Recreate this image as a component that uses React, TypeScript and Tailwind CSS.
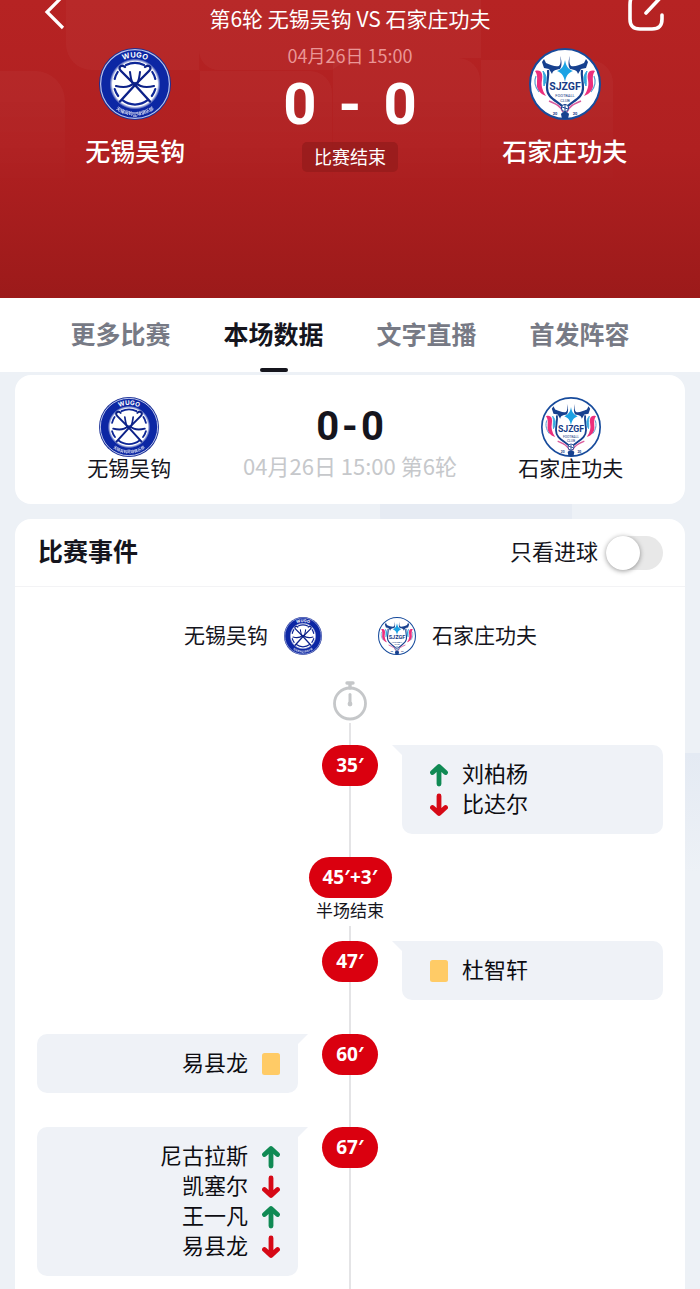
import React, { useState } from 'react';

type IconKind = 'up' | 'down' | 'yellow';

interface MatchEvent {
  minute: string;
  side: 'home' | 'away' | 'none';
  label?: string;
  spacing?: string;
  players: { name: string; icon: IconKind }[];
}

const HOME = '无锡吴钩';
const AWAY = '石家庄功夫';

const tabs = ['更多比赛', '本场数据', '文字直播', '首发阵容'];

const events: MatchEvent[] = [
  {
    minute: '35′',
    side: 'away',
    spacing: 'mb-[23px]',
    players: [
      { name: '刘柏杨', icon: 'up' },
      { name: '比达尔', icon: 'down' },
    ],
  },
  { minute: '45′+3′', side: 'none', label: '半场结束', players: [] },
  { minute: '47′', side: 'away', spacing: 'mb-[34px]', players: [{ name: '杜智轩', icon: 'yellow' }] },
  { minute: '60′', side: 'home', spacing: 'mb-[34px]', players: [{ name: '易县龙', icon: 'yellow' }] },
  {
    minute: '67′',
    side: 'home',
    players: [
      { name: '尼古拉斯', icon: 'up' },
      { name: '凯塞尔', icon: 'down' },
      { name: '王一凡', icon: 'up' },
      { name: '易县龙', icon: 'down' },
    ],
  },
];

const WugoLogo = ({ className }: { className: string }) => (
  <svg viewBox="0 0 72 72" className={className} aria-hidden="true">
    <defs>
      <path id="wugo-top" d="M9.5 36a26.5 26.5 0 0 1 53 0" />
      <path id="wugo-bottom" d="M4.5 36a31.5 31.5 0 0 0 63 0" />
      <radialGradient id="wugo-glow">
        <stop offset="0.88" stopColor="#fff" />
        <stop offset="1" stopColor="#fff" stopOpacity="0" />
      </radialGradient>
    </defs>
    <circle cx="36" cy="36" r="36" fill="#1a2f96" />
    <circle cx="36" cy="36" r="34.4" fill="#0c27a4" stroke="#b9c3ea" strokeWidth="1.2" />
    <circle cx="36" cy="36" r="25.5" fill="url(#wugo-glow)" />
    <g fill="none" stroke="#0c2596" strokeWidth="2.2" strokeLinecap="round">
      <path d="M27 17a21 21 0 0 1 18 0M23.4 52.2a20.5 20.5 0 0 0 25.2 0" />
      <path d="M15.7 31a20.5 20.5 0 0 1 3-7M15.7 41a20.5 20.5 0 0 0 3.5 7" />
      <path d="M56.3 31a20.5 20.5 0 0 0-3-7M56.3 41a20.5 20.5 0 0 1-3.500 7" />
    </g>
    <g fill="none" stroke="#0c2188" strokeLinecap="round">
      <path d="M21 53.5 36 37l14-14c2-2 2-4 0-5s-3 0-4 1" strokeWidth="2.4" />
      <path d="M51 53.5 36 37 22 23c-2-2-2-4 0-5s3 0 4 1" strokeWidth="2.4" />
      <path d="M31 24c1 7 1 10 4 13M41 24c-1 7-1 10-4 13" strokeWidth="2" />
      <path d="M17 38c8 2 14 1 18-3M55 38c-8 2-14 1-18-3" strokeWidth="2.2" />
    </g>
    <g fill="#fff" fontWeight="700" textAnchor="middle">
      <text fontSize="7.5" fontFamily="Inter, sans-serif">
        <textPath href="#wugo-top" startOffset="50%">WUGO</textPath>
      </text>
      <text fontSize="4.5" fontFamily="'Noto Sans CJK SC', sans-serif" opacity="0.8">
        <textPath href="#wugo-bottom" startOffset="50%">无锡吴钩足球俱乐部</textPath>
      </text>
    </g>
  </svg>
);

const GongfuLogo = ({ className }: { className: string }) => (
  <svg viewBox="0 0 72 72" className={className} aria-hidden="true">
    <circle cx="36" cy="36" r="35" fill="#fff" stroke="#174b9c" strokeWidth="2" />
    <g fill="#17418f">
      <path d="M31 8c1 4 1 8-1 10-4 1-8-1-13-3l-2-4-2 3 2 6 5 1 3 5c1-4 3-4 8-5 2-3 2-8 0-13Z" />
      <path d="M41 8c-1 4-1 8 1 10 4 1 8-1 13-3l2-4 2 3-2 6-5 1-3 5c-1-4-3-4-8-5-2-3-2-8 0-13Z" />
    </g>
    <path d="M19 22c1 6-1 10-1 18 0 11 12 13 18 21 6-8 18-10 18-21 0-8-2-12-1-18" fill="none" stroke="#17418f" strokeWidth="2.2" />
    <path d="M6 23c7-2 8 4 7 9s0 10 4 16c-6-2-10-7-9-13 0-4 1-8-2-12Z" fill="#ec2f7c" />
    <path d="M66 23c-7-2-8 4-7 9s0 10-4 16c6-2 10-7 9-13 0-4-1-8 2-12Z" fill="#ec2f7c" />
    <path d="M14 23c4 5 4 9 1 15-1-5 1-9-1-15ZM58 23c-4 5-4 9-1 15 1-5-1-9 1-15Z" fill="#34a7df" stroke="#34a7df" />
    <path d="M7 28c-2 5-1 11 3 16M65 28c2 5 1 11-3 16" fill="none" stroke="#5a9bd0" strokeWidth="1.2" />
    <path d="M36 12c1 6 3 9 8 11-5 2-7 5-8 11-1-6-3-9-8-11 5-2 7-5 8-11Z" fill="#1ba2e4" />
    <path d="M20 53c7 3 12 5 14 11M52 53c-7 3-12 5-14 11" fill="none" stroke="#d95b9b" strokeWidth="1.6" />
    <circle cx="36" cy="60" r="3.6" fill="#fff" stroke="#17418f" />
    <path d="M36 57v6M33 59l6 2" stroke="#17418f" />
    <path d="M32 66c2-3 6-3 8 0l-1 5h-6Z" fill="#17418f" />
    <g fill="#173b86" textAnchor="middle" fontFamily="Roboto, sans-serif" fontWeight="700">
      <text x="36" y="42" fontSize="10.5">SJZGF</text>
      <text x="36" y="49" fontSize="4" fontWeight="400">FOOTBALL</text>
      <text x="36" y="53.5" fontSize="4" fontWeight="400">CLUB</text>
      <text x="26" y="67" fontSize="4">20</text>
      <text x="46" y="67" fontSize="4">20</text>
    </g>
  </svg>
);

const EventIcon = ({ kind }: { kind: IconKind }) => {
  if (kind === 'yellow') {
    return (
      <svg viewBox="0 0 18 24" className="mt-1.5 h-6 w-[18px] shrink-0" aria-label="黄牌">
        <rect x="0" y="1" width="18" height="22" rx="2.5" fill="#ffcb66" />
      </svg>
    );
  }
  const up = kind === 'up';
  return (
    <svg
      viewBox="0 0 18 24"
      className={`mt-1.5 h-6 w-[18px] shrink-0 ${up ? 'text-[#108a54]' : 'text-[#d60916]'}`}
      fill="none"
      stroke="currentColor"
      strokeWidth="4.8"
      strokeLinecap="round"
      strokeLinejoin="round"
      aria-label={up ? '换上' : '换下'}
    >
      <path d={up ? 'M9 21V4M2.5 9.5l6.5-6 6.5 6' : 'M9 3v17M2.5 14.5l6.5 6 6.5-6'} />
    </svg>
  );
};

const Minute = ({ children }: { children: React.ReactNode }) => (
  <div className="flex h-[41px] items-center rounded-full bg-[#da000f] px-[14px] font-['Noto_Sans','Noto_Sans_CJK_SC',sans-serif] text-[19px] font-bold text-white">
    {children}
  </div>
);

const Bubble = ({ event }: { event: MatchEvent }) => {
  const home = event.side === 'home';
  return (
    <div
      className={`relative self-start rounded-[10px] bg-[#eff2f7] pt-3 pb-[17px] ${event.spacing ?? ''} ${
        home ? 'col-start-1 rounded-tr-none pr-[18px]' : 'col-start-3 rounded-tl-none pl-7'
      }`}
    >
      <span
        className={`absolute top-0 h-[10px] w-[10px] bg-[#eff2f7] ${
          home
            ? 'left-full [clip-path:polygon(0_0,100%_0,0_100%)]'
            : 'right-full [clip-path:polygon(0_0,100%_0,100%_100%)]'
        }`}
      />
      <ul>
        {event.players.map((player, index) => (
          <li
            key={index}
            className={`flex h-[30px] items-center gap-[14px] text-[22px] text-[#0d0d12] ${home ? 'flex-row-reverse' : ''}`}
          >
            <EventIcon kind={player.icon} />
            <span>{player.name}</span>
          </li>
        ))}
      </ul>
    </div>
  );
};

export default function App() {
  const [activeTab, setActiveTab] = useState('本场数据');
  const [goalsOnly, setGoalsOnly] = useState(false);

  return (
    <div className="flex min-h-screen flex-col bg-[#edf1f6] font-['Noto_Sans_CJK_SC',sans-serif] text-[#15151d]">
      {/* Match header */}
      <header className="relative h-[298px] overflow-hidden bg-linear-to-b from-[#b62323] via-[#b02021] to-[#9c1a1a] text-white">
        <svg className="absolute top-0 left-0 h-[200px] w-[700px] [mask-image:linear-gradient(#000_40%,transparent)]" aria-hidden="true">
          <g fill="#fff" fillOpacity="0.03">
            <path d="M66 0H199V70H92a26 26 0 0 1-26-26Z" />
            <path d="M0 71H35a30 30 0 0 1 30 30V200H0Z" />
            <path d="M199 0H481V58H350L332 70H219a20 20 0 0 1-20-20Z" />
            <path d="M200 71H310a22 22 0 0 1 22 22V200H200Z" />
            <path d="M333 58H458a22 22 0 0 1 22 22V200H333Z" />
            <path d="M481 60H590a23 23 0 0 1 23 23V200H481Z" />
          </g>
        </svg>

        <div className="relative flex h-10 items-start justify-between px-9">
          <button type="button" aria-label="返回" className="w-9">
            <svg viewBox="0 0 36 34" className="h-[34px] w-9" fill="none" stroke="#fff" strokeWidth="3.2">
              <path d="M27-4 11 12l16 16" />
            </svg>
          </button>
          <h1 className="text-[21px] leading-9">第6轮 {HOME} VS {AWAY}</h1>
          <button type="button" aria-label="分享" className="w-9">
            <svg viewBox="0 0 36 34" className="h-[34px] w-9" fill="none" stroke="#fff" strokeWidth="3.6" strokeLinecap="round">
              <path d="M4-3C2-1 2 1 2 5v14c0 7 3 10 10 10h12c7 0 10-3 10-10v-4M18 13 34-4" />
            </svg>
          </button>
        </div>

        <div className="relative grid grid-cols-3 px-7">
          <div className="flex flex-col items-center pt-2">
            <WugoLogo className="h-[72px] w-[72px]" />
            <h2 className="mt-3 text-[25px] leading-9 font-medium">{HOME}</h2>
          </div>
          <div className="flex flex-col items-center">
            <time className="text-[18px] leading-[30px] text-[#ea9696]">04月26日 15:00</time>
            <div className="flex gap-[22px] font-[Roboto,sans-serif] text-[58px] leading-[68px] font-bold">
              <span>0</span>
              <span>-</span>
              <span>0</span>
            </div>
            <span className="mt-1 rounded-[5px] bg-[#961b1b]/80 px-3 pb-0.5 text-[18px] leading-7">比赛结束</span>
          </div>
          <div className="flex flex-col items-center pt-2">
            <GongfuLogo className="h-[72px] w-[72px]" />
            <h2 className="mt-3 text-[25px] leading-9 font-medium">{AWAY}</h2>
          </div>
        </div>
      </header>

      {/* Tabs */}
      <nav className="grid h-[74px] grid-cols-4 bg-white px-11">
        {tabs.map((tab) => {
          const active = tab === activeTab;
          return (
            <button
              key={tab}
              type="button"
              onClick={() => setActiveTab(tab)}
              className={`flex flex-col items-center justify-between pt-4 text-[25px] leading-[38px] font-bold ${
                active ? 'text-[#15151d]' : 'text-[#777a85]'
              }`}
            >
              {tab}
              {active && <span className="h-1 w-7 rounded-full bg-[#15151d]" />}
            </button>
          );
        })}
      </nav>

      <main className="relative flex flex-1 flex-col gap-[15px] px-[15px] pt-[3px]">
        {/* Background tiles showing between the cards */}
        <div className="absolute top-[100px] left-[380px] h-[60px] w-48 rounded-bl-2xl bg-[#e6ebf3]" />
        <div className="absolute top-[381px] right-0 h-[120px] w-10 bg-linear-to-b from-[#e4eaf3] to-[#edf1f6]" />

        {/* Match summary */}
        <section className="relative grid h-[129px] grid-cols-3 rounded-2xl bg-white px-1 pt-[22px]">
          <div className="flex flex-col items-center">
            <WugoLogo className="h-[60px] w-[60px]" />
            <span className="text-[21px] leading-5">{HOME}</span>
          </div>
          <div className="flex flex-col items-center">
            <div className="flex gap-[3px] pt-2.5 pb-1 font-[Roboto,sans-serif] text-[40px] leading-10 font-bold">
              <span>0</span>
              <span>-</span>
              <span>0</span>
            </div>
            <time className="text-[22px] leading-7 whitespace-nowrap text-[#c6c8cb]">04月26日 15:00 第6轮</time>
          </div>
          <div className="flex flex-col items-center">
            <GongfuLogo className="h-[60px] w-[60px]" />
            <span className="text-[21px] leading-5">{AWAY}</span>
          </div>
        </section>

        {/* Match events */}
        <section className="relative flex flex-1 flex-col rounded-t-2xl bg-white">
          <div className="flex h-[68px] items-center justify-between border-b border-[#f3f3f5] pr-[22px] pl-[23px]">
            <h2 className="pb-1 text-[25px] font-bold">比赛事件</h2>
            <label className="flex items-center gap-2 text-[22px]">
              <span className="pb-1">只看进球</span>
              <input
                type="checkbox"
                checked={goalsOnly}
                onChange={(e) => setGoalsOnly(e.target.checked)}
                className="flex h-[34px] w-[57px] appearance-none rounded-full bg-[#e8e8e8] before:h-[34px] before:w-[34px] before:rounded-full before:bg-white before:shadow-[0_1px_5px_rgba(0,0,0,0.4)] checked:justify-end checked:bg-[#da000f]"
              />
            </label>
          </div>

          <div className="grid grid-cols-2 gap-14 pt-[30px] text-[21px] leading-[34px]">
            <div className="flex items-start justify-end gap-4">
              {HOME}
              <WugoLogo className="h-[38px] w-[38px]" />
            </div>
            <div className="flex items-start gap-4">
              <GongfuLogo className="h-[38px] w-[38px]" />
              {AWAY}
            </div>
          </div>

          <div className="flex flex-col items-center pt-[26px]">
            <svg viewBox="0 0 36 40" className="h-10 w-9" fill="none" stroke="#c5c7c9" aria-hidden="true">
              <circle cx="18" cy="22.5" r="15.5" strokeWidth="2.8" />
              <path d="M15 2h6M18 2v5" strokeWidth="3.4" strokeLinecap="round" />
              <path d="M18 13.5v10" strokeWidth="3" strokeLinecap="round" />
              <circle cx="18" cy="23" r="2.4" fill="#c5c7c9" stroke="none" />
            </svg>
            <div className="mt-0.5 h-[22px] w-0.5 bg-[#e4e4e6]" />
          </div>

          <ol className="flex flex-1 flex-col px-[22px]">
            {events.map((event) => (
              <li key={event.minute} className="grid grid-cols-[1fr_104px_1fr] last:flex-1">
                <div className="col-start-2 row-start-1 flex flex-col items-center">
                  <Minute>{event.minute}</Minute>
                  {event.label && <p className="pt-0.5 pb-1.5 text-[17px] leading-5">{event.label}</p>}
                  <div className="min-h-[15px] w-0.5 flex-1 bg-[#e4e4e6]" />
                </div>
                {event.side !== 'none' && (
                  <Bubble event={event} />
                )}
              </li>
            ))}
          </ol>
        </section>
      </main>
    </div>
  );
}
